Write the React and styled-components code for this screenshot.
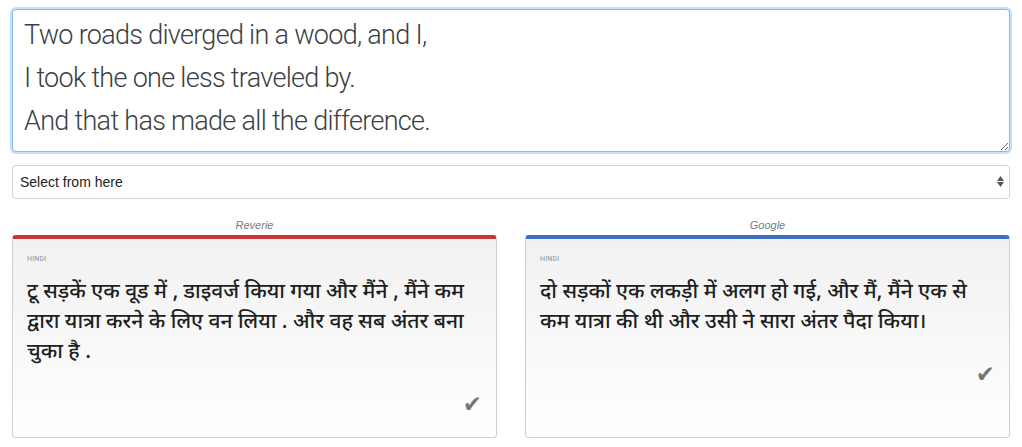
import styled, { createGlobalStyle } from "styled-components";

const GlobalStyle = createGlobalStyle`
    html, body {
        margin: 0;
        padding: 0;
        background: #ffffff;
    }
    body {
        font-family: "Liberation Sans", Arial, sans-serif;
        color: #333333;
    }
`;

const Page = styled.div`
    padding: 9px 12px 10px;
    box-sizing: border-box;
    width: 1022px;
`;

const Poem = styled.textarea`
    display: block;
    width: 100%;
    height: 143px;
    box-sizing: border-box;
    margin: 0;
    padding: 4px 11px;
    border: 1px solid #84b9f3;
    border-radius: 4px;
    box-shadow: 0 0 0 2px rgba(130, 184, 245, 0.45);
    outline: none;
    font-family: Roboto, "Liberation Sans", sans-serif;
    font-weight: 300;
    font-size: 27px;
    letter-spacing: -0.7px;
    line-height: 43px;
    color: #3c3f44;
    resize: vertical;
    overflow: hidden;
`;

const SelectWrap = styled.div`
    position: relative;
    margin-top: 13px;
`;

const Select = styled.select`
    display: block;
    width: 100%;
    height: 34px;
    box-sizing: border-box;
    padding: 0 7px;
    border: 1px solid #cfd3d8;
    border-radius: 4px;
    background: #fff;
    font-family: "Liberation Sans", Arial, sans-serif;
    font-size: 14px;
    color: #222;
    appearance: none;
    outline: none;
`;

const Arrows = styled.span`
    position: absolute;
    right: 6px;
    top: 11px;
    display: flex;
    flex-direction: column;
    gap: 1px;
    pointer-events: none;
`;

const Results = styled.div`
    display: grid;
    grid-template-columns: 1fr 1fr;
    column-gap: 28px;
    margin-top: 20px;
`;

const Column = styled.div`
    display: flex;
    flex-direction: column;
`;

const Engine = styled.div`
    text-align: center;
    font-family: "Liberation Sans", Arial, sans-serif;
    font-style: italic;
    font-size: 11px;
    line-height: 13px;
    color: #777b80;
    margin-bottom: 3px;
`;

const Card = styled.div`
    display: flex;
    flex-direction: column;
    box-sizing: border-box;
    height: 203px;
    border: 1px solid #cfcfcf;
    border-top: 4px solid ${(p) => p.$accent};
    border-radius: 4px;
    background: linear-gradient(to bottom, #f1f1f1 0%, #ffffff 100%);
    padding: 16px 14px 0 14px;
`;

const Lang = styled.div`
    font-family: Roboto, "Liberation Sans", sans-serif;
    font-size: 7px;
    line-height: 8px;
    letter-spacing: 0.2px;
    color: #8a8f96;
    text-transform: uppercase;
`;

const Output = styled.p`
    margin: 15px 0 0;
    font-family: "Noto Sans Devanagari", "Lohit Devanagari", "Noto Sans", sans-serif;
    font-weight: 500;
    font-size: 21px;
    line-height: 30px;
    color: #1e1e1e;
`;

const Tick = styled.div`
    align-self: flex-end;
    margin-top: 24px;
    font-family: "DejaVu Sans", sans-serif;
    font-size: 23px;
    line-height: 24px;
    color: #76767a;
`;

const results = [
    {
        engine: "Reverie",
        accent: "#c93434",
        text: "टू सड़कें एक वूड में , डाइवर्ज किया गया और मैंने , मैंने कम द्वारा यात्रा करने के लिए वन लिया . और वह सब अंतर बना चुका है .",
    },
    {
        engine: "Google",
        accent: "#3b6fc4",
        text: "दो सड़कों एक लकड़ी में अलग हो गई, और मैं, मैंने एक से कम यात्रा की थी और उसी ने सारा अंतर पैदा किया।",
    },
];

const poem = "Two roads diverged in a wood, and I,\nI took the one less traveled by.\nAnd that has made all the difference.";

export default function App() {
    return (
        <Page>
            <GlobalStyle />
            <Poem defaultValue={poem} spellCheck={false} />
            <SelectWrap>
                <Select defaultValue="">
                    <option value="">Select from here</option>
                </Select>
                <Arrows>
                    <svg width="7" height="5" viewBox="0 0 7 5">
                        <path d="M3.5 0 L7 5 L0 5 Z" fill="#555" />
                    </svg>
                    <svg width="7" height="5" viewBox="0 0 7 5">
                        <path d="M0 0 L7 0 L3.5 5 Z" fill="#555" />
                    </svg>
                </Arrows>
            </SelectWrap>
            <Results>
                {results.map((r) => (
                    <Column key={r.engine}>
                        <Engine>{r.engine}</Engine>
                        <Card $accent={r.accent}>
                            <Lang>Hindi</Lang>
                            <Output>{r.text}</Output>
                            <Tick>✔</Tick>
                        </Card>
                    </Column>
                ))}
            </Results>
        </Page>
    );
}
